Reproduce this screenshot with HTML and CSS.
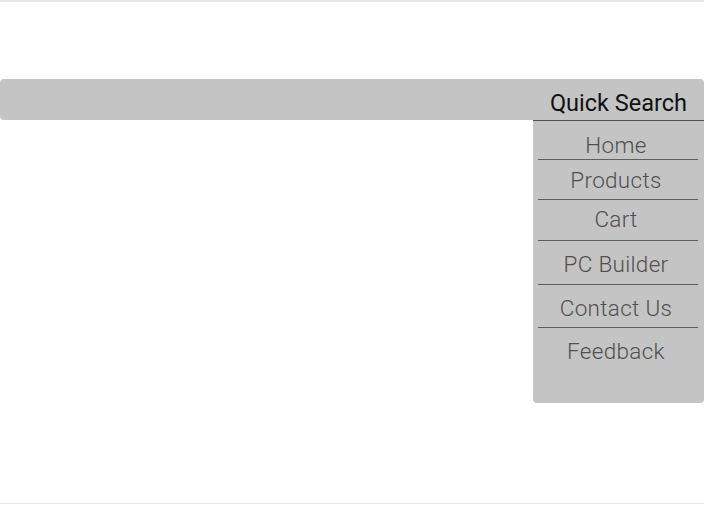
FILE: index.html
```html
<!DOCTYPE html>
<html lang="en">
<head>
<meta charset="utf-8">
<title>Quick Search</title>
<link rel="stylesheet" href="styles.css">
</head>
<body>
<div class="page">
  <div class="top-rule"></div>
  <header class="search-bar">
    <span class="search-title">Quick Search</span>
  </header>
  <nav class="menu">
    <a class="menu-item item-home">Home</a>
    <a class="menu-item item-products">Products</a>
    <a class="menu-item item-cart">Cart</a>
    <a class="menu-item item-builder">PC Builder</a>
    <a class="menu-item item-contact">Contact Us</a>
    <a class="menu-item item-feedback">Feedback</a>
  </nav>
  <div class="bottom-rule"></div>
</div>
</body>
</html>
```
FILE: styles.css
```css
* { box-sizing: border-box; }
html, body { margin: 0; padding: 0; background: #ffffff; }
body { font-family: Roboto, "Liberation Sans", sans-serif; }

.page {
  height: 505px;
  display: flex;
  flex-direction: column;
}

.top-rule {
  height: 2px;
  background: #e6e6e6;
  flex: none;
}

.search-bar {
  margin-top: 77px;
  height: 41px;
  background: #c4c4c4;
  border-radius: 4px 4px 0 4px;
  padding: 11px 17px 0 0;
  display: flex;
  justify-content: flex-end;
  align-items: flex-start;
  flex: none;
}

.search-title {
  font-size: 23.5px;
  line-height: 27px;
  font-weight: 400;
  color: #111111;
}

.menu {
  align-self: flex-end;
  width: 171px;
  background: #c4c4c4;
  border-top: 1px solid #4f4f4f;
  border-radius: 0 0 4px 4px;
  display: flex;
  flex-direction: column;
  flex: none;
}

.menu-item {
  display: block;
  margin: 0 6px 0 5px;
  padding-right: 4px;
  text-align: center;
  font-size: 22.5px;
  line-height: 26px;
  letter-spacing: 0.3px;
  font-weight: 300;
  color: #505050;
  border-bottom: 1px solid #5e5e5e;
}

.item-home { padding-top: 11px; padding-bottom: 1px; }
.item-products { padding-top: 7px; padding-bottom: 6px; }
.item-cart { padding-top: 6px; padding-bottom: 8px; }
.item-builder { padding-top: 10px; padding-bottom: 7px; }
.item-contact { padding-top: 10px; padding-bottom: 6px; }
.item-feedback { padding-top: 10px; padding-bottom: 39px; border-bottom: none; }

.bottom-rule {
  margin-top: auto;
  margin-bottom: 1px;
  height: 1px;
  background: #e6e6e6;
  flex: none;
}
```
